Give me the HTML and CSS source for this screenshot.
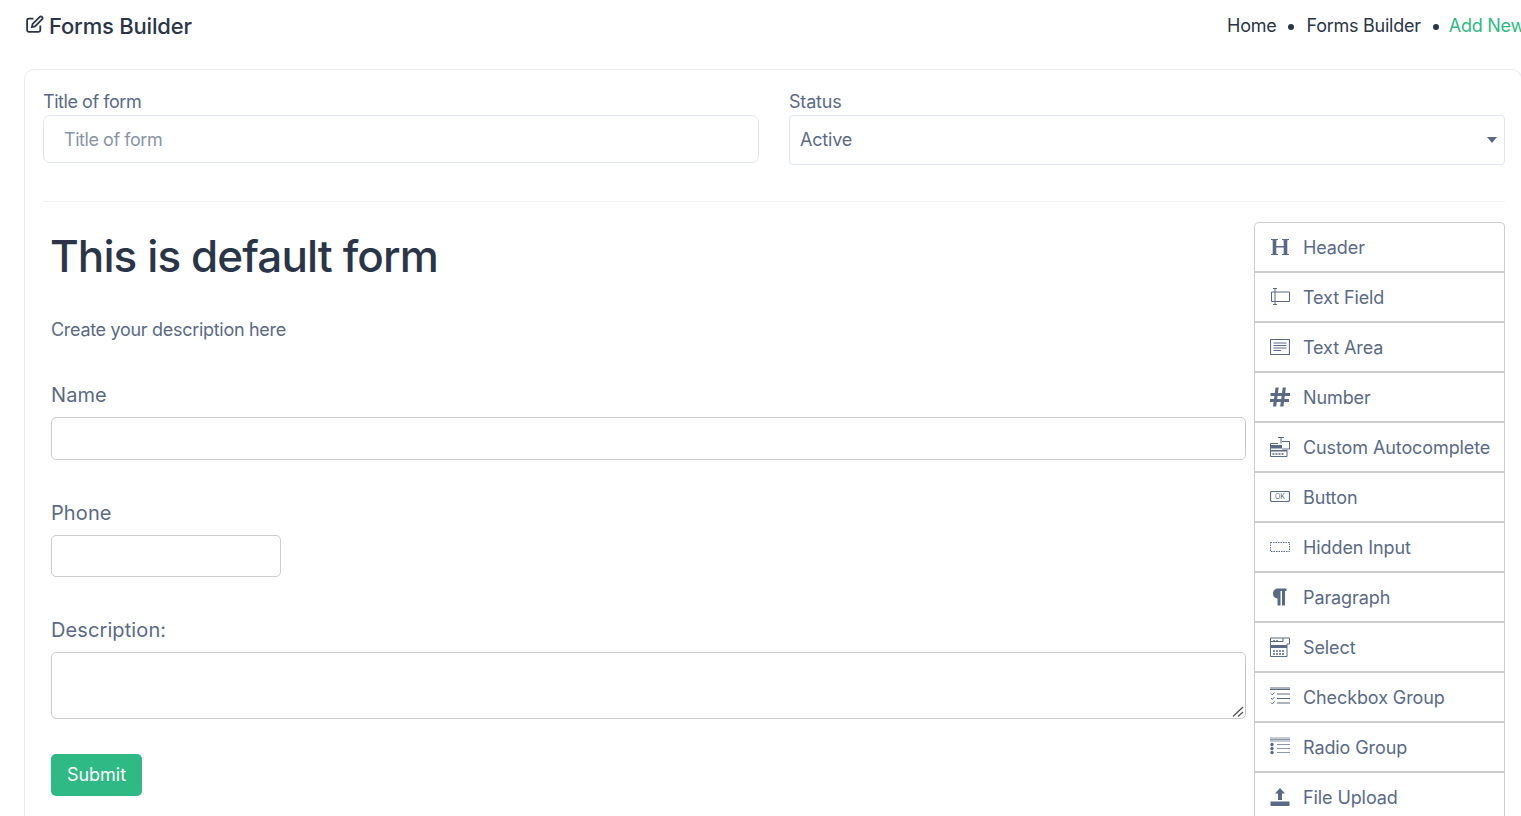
FILE: index.html
```html
<!DOCTYPE html>
<html>
<head>
<title>Forms Builder</title>
<link rel="stylesheet" href="styles.css">
</head>
<body>
  <div class="page">
    <div class="topbar">
      <h1 class="page-title">
        <svg class="title-icon" viewBox="0 0 18 18"><path d="M8 3.500H3.500A1.500 1.500 0 0 0 2 5v9.500A1.500 1.500 0 0 0 3.500 16H13a1.500 1.500 0 0 0 1.500-1.500V10"/><path d="M6.500 11.500l.7-3L14 1.700a1.400 1.400 0 0 1 2 0l.3.3a1.400 1.400 0 0 1 0 2l-6.800 6.800z"/></svg>
        Forms Builder
      </h1>
      <div class="crumbs">
        <a href="#">Home</a>
        <span class="dot"></span>
        <a href="#">Forms Builder</a>
        <span class="dot"></span>
        <a href="#" class="active">Add New</a>
      </div>
    </div>

    <div class="card">
      <div class="settings">
        <div class="field">
          <label for="title">Title of form</label>
          <input type="text" id="title" class="text-input" placeholder="Title of form">
        </div>
        <div class="field">
          <label for="status">Status</label>
          <div class="select-wrap">
            <select id="status" class="select-input">
              <option>Active</option>
              <option>Inactive</option>
            </select>
          </div>
        </div>
      </div>
      <hr class="divider">

      <div class="builder">
        <div class="stage">
          <h2 class="form-title">This is default form</h2>
          <p class="form-desc">Create your description here</p>
          <div class="form-row">
            <label for="name">Name</label>
            <input type="text" id="name" class="stage-input">
          </div>
          <div class="form-row">
            <label for="phone">Phone</label>
            <input type="text" id="phone" class="stage-input short">
          </div>
          <div class="form-row">
            <label for="description">Description:</label>
            <div class="area-wrap">
              <textarea id="description" class="stage-input area"></textarea>
              <svg class="grip" viewBox="0 0 12 11"><path d="M1 10.500L11 1M6 10.500L11 6"/></svg>
            </div>
          </div>
          <button type="button" class="submit">Submit</button>
        </div>

        <ul class="palette">
          <li>
            <svg viewBox="0 0 20 20"><path class="fill" d="M1 2h7v1l-1.700.3V9h7.400V3.300L12 3V2h7v1l-1.700.3v13.400L19 17v1h-7v-1l1.700-.3v-6.200H6.300v6.200L8 17v1H1v-1l1.700-.3V3.300L1 3z"/></svg>
            Header
          </li>
          <li>
            <svg viewBox="0 0 20 20"><path class="thin" d="M1.500 5H19.500V14.500H1.500z M5 1.500V17.500 M3 1.500H7 M3 17.500H7"/></svg>
            Text Field
          </li>
          <li>
            <svg viewBox="0 0 20 20"><path d="M.5 2.500H19.500V17.500H.5z" /><path class="thin" d="M3.500 6H16.500 M3.500 8.500H16.500 M3.500 11H16.500 M3.500 13.500H11"/></svg>
            Text Area
          </li>
          <li>
            <svg viewBox="0 0 20 20"><path class="fill" d="M5.500 .5h3.200L8 6h4l.7-5.500h3.200L15.200 6H20v3h-5.200l-.4 3H19v3h-5l-.6 4.500h-3.200l.6-4.500h-4l-.6 4.500H3l.6-4.500H0v-3h4l.4-3H.500V6h4.300zM7.600 9l-.4 3h4l.4-3z"/></svg>
            Number
          </li>
          <li>
            <svg viewBox="0 0 20 20"><path class="thin" d="M8 .5h6M11 .5v6M8 6.500H.5V19.500H17V13"/><path class="thin" d="M12 4.500h7.500V12H12"/><path class="fill" d="M1 8h11v3.500H1zM1 13h16v1.500H1z"/><path class="thin dash" d="M2.500 17h12"/></svg>
            Custom Autocomplete
          </li>
          <li>
            <svg viewBox="0 0 20 20"><rect x=".5" y="4.500" width="19" height="10" rx="1.500"/><text class="ok-label" x="10" y="12">OK</text></svg>
            Button
          </li>
          <li>
            <svg viewBox="0 0 20 20"><rect class="thin dotted" x=".5" y="5.500" width="19" height="9"/></svg>
            Hidden Input
          </li>
          <li>
            <svg viewBox="0 0 20 20"><path class="fill" d="M16.500 1.500v2.500H15V18.500h-3V4H10.500V18.500h-3V11.500C4.500 11.500 3 9.500 3 6.800 3 3.800 4.800 1.500 7.800 1.500z"/></svg>
            Paragraph
          </li>
          <li>
            <svg viewBox="0 0 20 20"><path class="thin" d="M.5 4.500H13V1h6.500V7H17M.5 1H13M.5 1V19.500H17V7"/><path class="fill" d="M1 8h16v3H1z"/><path class="thin dash" d="M3 4h5M3 14h11M3 17h11"/></svg>
            Select
          </li>
          <li>
            <svg viewBox="0 0 20 20"><path class="thin" d="M0 1h20M0 2.500h20M7 7h13M7 11.500h13M7 16h13"/><path class="thin" d="M1 6.500l1.300 1.500L4.500 5.500M1 11l1.300 1.500L4.500 10M1 15.500l1.300 1.500L4.500 14.500"/></svg>
            Checkbox Group
          </li>
          <li>
            <svg viewBox="0 0 20 20"><path class="hair" d="M0 1h20M0 2.500h20M0 4h20M7 7.500h13M7 11.500h13M7 15.500h13"/><circle class="fill" cx="2" cy="7.500" r="1.700"/><circle class="fill" cx="2" cy="11.500" r="1.700"/><circle class="fill" cx="2" cy="15.500" r="1.700"/></svg>
            Radio Group
          </li>
          <li>
            <svg viewBox="0 0 20 20"><path class="fill" d="M10 1l5 5.500h-3V13H8V6.500H5zM.5 14.500h19V19H.5z"/></svg>
            File Upload
          </li>
        </ul>
      </div>
    </div>
  </div>
</body>
</html>
```

FILE: styles.css
```css
html, body {
  margin: 0;
  height: 816px;
  overflow: hidden;
  background: #fff;
}
body {
  font-family: Inter, "Noto Sans", sans-serif;
  color: #5a6a85;
}
.page {
  padding-left: 24px;
}
.topbar {
  display: flex;
  justify-content: space-between;
  align-items: center;
  height: 52px;
  margin-right: -4px;
  margin-bottom: 17px;
}
.page-title {
  display: flex;
  align-items: center;
  gap: 5px;
  margin: 0;
  font-size: 22px;
  font-weight: 500;
  letter-spacing: -0.2px;
  color: #2a3547;
}
.title-icon {
  width: 19px;
  height: 19px;
  margin-top: -3px;
  margin-left: 1px;
  fill: none;
  stroke: #2a3547;
  stroke-width: 1.700;
}
.crumbs {
  display: flex;
  align-items: center;
  gap: 12px;
  padding-bottom: 1px;
  font-size: 18px;
  letter-spacing: -0.25px;
}
.crumbs a {
  color: #2a3547;
  text-decoration: none;
}
.crumbs a.active {
  margin-left: -2px;
  color: #2fb984;
}
.dot {
  width: 6px;
  height: 6px;
  margin: 2px 0 0;
  border-radius: 50%;
  background: #2a3547;
}
.card {
  margin-right: -1px;
  padding: 18px 16px 0 18px;
  border: 1px solid #e9edf3;
  border-bottom: 0;
  border-radius: 10px 10px 0 0;
}
.settings {
  display: grid;
  grid-template-columns: 716px 716px;
  gap: 30px;
}
.field label {
  display: block;
  height: 27px;
  line-height: 28px;
  font-size: 18px;
  letter-spacing: -0.45px;
}
.field + .field label {
  letter-spacing: -0.2px;
}
.text-input, .select-input {
  display: block;
  width: 100%;
  box-sizing: border-box;
  border: 1px solid #dfe5ef;
  border-radius: 7px;
  background: #fff;
  font: inherit;
  font-size: 18px;
  color: #5a6a85;
  outline: none;
}
.text-input {
  height: 48px;
  padding: 0 20px;
  letter-spacing: -0.45px;
}
.text-input::placeholder {
  color: #8a94a6;
  opacity: 1;
}
.select-input {
  height: 50px;
  padding: 0 10px 2px;
  border-radius: 4px;
  letter-spacing: -0.2px;
  appearance: none;
}
.select-wrap {
  position: relative;
}
.select-wrap::after {
  content: "";
  position: absolute;
  top: 22px;
  right: 8px;
  border: 5px solid transparent;
  border-top: 6px solid #5a6a85;
  border-bottom: 0;
}
.divider {
  height: 1px;
  margin: 36px 0 20px;
  border: 0;
  background: #eef1f6;
}
.builder {
  display: flex;
  justify-content: space-between;
}
.stage {
  width: 1195px;
  margin-left: 8px;
}
.form-title {
  margin: 5px 0 0 -1px;
  height: 57px;
  line-height: 58px;
  font-size: 44px;
  font-weight: 500;
  letter-spacing: -0.9px;
  color: #2a3547;
}
.form-desc {
  margin: 33px 0 0;
  height: 25px;
  line-height: 25px;
  font-size: 18px;
  letter-spacing: -0.3px;
}
.form-row {
  margin-top: 40px;
}
.form-row label {
  display: block;
  height: 26px;
  line-height: 26px;
  margin-bottom: 9px;
  font-size: 20px;
  letter-spacing: 0.1px;
}
.stage-input {
  display: block;
  width: 100%;
  height: 43px;
  box-sizing: border-box;
  border: 1px solid #ccc;
  border-radius: 5px;
  background: #fff;
  outline: none;
}
.stage-input.short {
  width: 230px;
  height: 42px;
}
.stage-input.area {
  height: 67px;
  resize: none;
}
.area-wrap {
  position: relative;
}
.grip {
  position: absolute;
  right: 2px;
  bottom: 2px;
  width: 12px;
  height: 11px;
  fill: none;
  stroke: #555;
  stroke-width: 1.300;
}
.submit {
  margin-top: 35px;
  width: 91px;
  height: 42px;
  padding-bottom: 2px;
  border: 0;
  border-radius: 5px;
  background: #2fb984;
  color: #fff;
  font: inherit;
  font-size: 18px;
  letter-spacing: 0;
}
.palette {
  width: 251px;
  margin: 0;
  padding: 0;
  box-sizing: border-box;
  list-style: none;
  border: 1px solid #ccc;
  border-bottom: 0;
  border-radius: 5px 5px 0 0;
}
.palette li {
  display: flex;
  align-items: center;
  gap: 13px;
  height: 50px;
  box-sizing: border-box;
  padding-left: 15px;
  border-bottom: 2px solid #ccc;
  font-size: 18px;
  letter-spacing: -0.1px;
}
.palette svg {
  width: 20px;
  height: 20px;
  flex: none;
  fill: none;
  stroke: #5a6a85;
  stroke-width: 1.200;
}
.palette svg .thin {
  fill: none;
  stroke-width: 1;
}
.palette svg .hair {
  fill: none;
  stroke-width: .7;
}
.palette svg .fill {
  fill: #5a6a85;
  stroke: none;
}
.palette svg .dash {
  stroke-dasharray: 2 1;
  stroke-width: 1.500;
}
.palette svg .dotted {
  stroke-dasharray: 1.500 1;
}
.palette svg .ok-label {
  fill: #5a6a85;
  stroke: none;
  font-size: 7px;
  letter-spacing: 0;
  text-anchor: middle;
}
```
